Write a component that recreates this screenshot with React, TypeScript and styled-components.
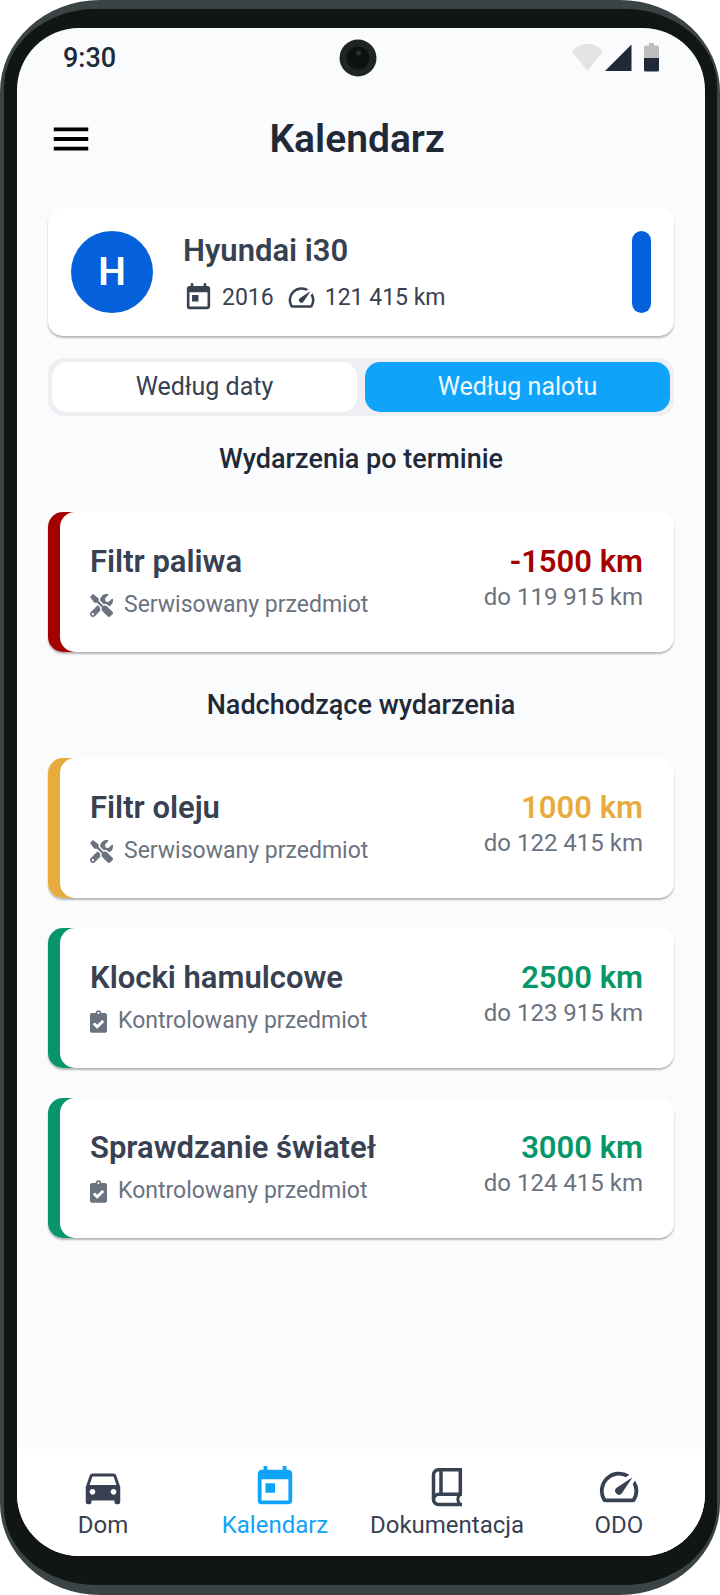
import React from "react";
import styled, { createGlobalStyle, css } from "styled-components";
import { MdMenu, MdToday, MdSpeed, MdDirectionsCar } from "react-icons/md";
import { FaTools, FaClipboardCheck } from "react-icons/fa";

const GlobalStyle = createGlobalStyle`
  *, *::before, *::after { box-sizing: border-box; }
  body {
    margin: 0;
    background: #ffffff;
    font-family: Roboto, "Liberation Sans", sans-serif;
    color: #374151;
  }
  h1, h2, h3, p, ul { margin: 0; padding: 0; }
  button { font: inherit; border: 0; padding: 0; cursor: pointer; }
  svg { display: block; flex: none; }
`;

const colors = {
  ink: "#1f2937",
  slate: "#374151",
  muted: "#6b7280",
  sky: "#10a3fa",
  brand: "#0561db",
  red: "#a50000",
  amber: "#e8ac3e",
  green: "#079669",
};

const Shell = styled.div`
  display: flex;
  flex-direction: column;
  min-height: 100vh;
  padding: 9px 3px 10px 4px;
  border-radius: 100px / 92px;
  background: #3b4444;
`;

const Bezel = styled.div`
  flex: 1;
  display: flex;
  flex-direction: column;
  padding: 19px 12px 29px 13px;
  border-radius: 92px / 78px;
  background: #111513;
`;

const Screen = styled.div`
  flex: 1;
  display: flex;
  flex-direction: column;
  overflow: hidden;
  border-radius: 62px;
  background: #fafbfd;
`;

const StatusBar = styled.div`
  display: grid;
  grid-template-columns: 1fr 46px 1fr;
  align-items: center;
  height: 60px;
  padding: 0 45px 0 46px;
  color: ${colors.ink};
  font-size: 27px;
  line-height: 30px;
  font-weight: 500;
`;

const StatusIcons = styled.div`
  display: flex;
  justify-content: flex-end;
`;

const Header = styled.header`
  display: grid;
  grid-template-columns: 46px 1fr 54px;
  align-items: center;
  height: 102px;
  padding: 0 31px;
`;

const MenuButton = styled.button`
  background: none;
  color: #000000;
`;

const Title = styled.h1`
  text-align: center;
  font-size: 39px;
  line-height: 46px;
  font-weight: 600;
  color: ${colors.ink};
`;

const Main = styled.main`
  flex: 1;
  display: flex;
  flex-direction: column;
  padding: 18px 31px 32px;
`;

const cardShadow = css`
  box-shadow: 0 2px 2px rgba(0, 0, 0, 0.28);
`;

const VehicleCard = styled.section`
  display: flex;
  align-items: center;
  gap: 30px;
  padding: 23px;
  border-radius: 15px;
  background: #ffffff;
  ${cardShadow}
`;

const Avatar = styled.div`
  display: grid;
  place-items: center;
  width: 82px;
  height: 82px;
  border-radius: 50%;
  background: ${colors.brand};
  color: #ffffff;
  font-size: 39px;
  font-weight: 600;
`;

const VehicleInfo = styled.div`
  flex: 1;
`;

const CardTitle = styled.h3`
  font-size: 31px;
  line-height: 38px;
  font-weight: 600;
  color: ${colors.slate};
`;

const VehicleMeta = styled.div`
  display: flex;
  gap: 12px;
  margin-top: 12px;
  font-size: 23px;
  line-height: 31px;
`;

const MetaItem = styled.span`
  display: flex;
  align-items: center;
  gap: 8px;
`;

const ColorBar = styled.div`
  width: 19px;
  height: 82px;
  border-radius: 10px;
  background: ${colors.brand};
`;

const Segmented = styled.div`
  display: grid;
  grid-template-columns: 1fr 1fr;
  gap: 8px;
  margin-top: 22px;
  padding: 4px;
  border-radius: 16px;
  background: #edeff2;
`;

const Segment = styled.button<{ $active?: boolean }>`
  height: 50px;
  border-radius: 15px;
  font-size: 25px;
  line-height: 30px;
  background: ${(p) => (p.$active ? colors.sky : "#ffffff")};
  color: ${(p) => (p.$active ? "#f0f9ff" : colors.slate)};
`;

const SectionTitle = styled.h2`
  padding: 27px 0 37px;
  text-align: center;
  font-size: 27px;
  line-height: 32px;
  font-weight: 500;
  color: ${colors.ink};
`;

const EventList = styled.ul`
  display: flex;
  flex-direction: column;
  gap: 30px;
  list-style: none;

  & + ${SectionTitle} {
    padding-top: 37px;
  }
`;

const EventItem = styled.li<{ $accent: string }>`
  padding-left: 12px;
  border-radius: 15px;
  background: linear-gradient(${(p) => p.$accent}, ${(p) => p.$accent}) left / 40px 100% no-repeat;
  ${cardShadow}
`;

const EventBody = styled.div`
  display: flex;
  justify-content: space-between;
  min-height: 140px;
  padding: 31px 31px 29px 30px;
  border-radius: 15px;
  background: #ffffff;
`;

const EventKind = styled.p`
  display: flex;
  align-items: center;
  gap: 11px;
  margin-top: 9px;
  font-size: 23px;
  line-height: 30px;
  color: ${colors.muted};
`;

const ServiceIcon = styled(FaTools)`
  width: 23px;
  height: 23px;
`;

const CheckIcon = styled(FaClipboardCheck)`
  width: 17px;
  height: 23px;
`;

const EventDue = styled.div`
  text-align: right;
`;

const Remaining = styled.p<{ $color: string }>`
  font-size: 31px;
  line-height: 38px;
  font-weight: 600;
  color: ${(p) => p.$color};
`;

const Target = styled.p`
  font-size: 24px;
  line-height: 32px;
  color: ${colors.muted};
`;

const NavBar = styled.nav`
  display: grid;
  grid-template-columns: repeat(4, 1fr);
  padding: 15px 0 16px;
  background: #ffffff;
`;

const NavLink = styled.a<{ $active?: boolean }>`
  display: flex;
  flex-direction: column;
  align-items: center;
  font-size: 24px;
  line-height: 30px;
  text-decoration: none;
  color: ${(p) => (p.$active ? colors.sky : colors.slate)};
`;

const Camera = () => (
  <svg width="38" height="38" viewBox="0 0 38 38" aria-hidden="true">
    <circle cx="19" cy="19" r="18.5" fill="#202423" />
    <circle cx="19" cy="19" r="11.5" fill="#0d1211" />
    <circle cx="19.5" cy="14" r="2.5" fill="#2b3130" />
  </svg>
);

const SignalIcons = () => (
  <svg width="88" height="30" viewBox="0 0 88 30" aria-hidden="true">
    <path d="M0 8.5C4 3 10 1 15.500 1S27 3 31 8.500L15.500 28Z" fill="#e3e4e6" />
    <path d="M59.500 1.500V28H33Z" fill={colors.ink} />
    <path d="M72 15V4q0-1.500 1.500-1.500H77V0h5v2.500h3.500q1.500 0 1.500 1.500v11Z" fill="#bcbdbf" />
    <path d="M72 15h15v12q0 1.500-1.500 1.500h-12Q72 28.500 72 27Z" fill={colors.ink} />
  </svg>
);

const BookIcon = () => (
  <svg width="46" height="46" viewBox="0 0 46 46" fill="none" stroke="currentColor" strokeWidth="3.5" aria-hidden="true">
    <path d="M36.300 30V5.800H14.500a5 5 0 0 0-5 5v24.700a5 5 0 0 0 5 5H38" />
    <path d="M17 6v24" strokeWidth="3.500" />
    <path d="M9.500 35.500a5.500 5.500 0 0 1 5.500-5.300h23" />
    <path d="M36 30.500C33 33 33 37.500 36.500 41" strokeWidth="3" />
  </svg>
);

type EventData = {
  name: string;
  kind: "service" | "check";
  remaining: string;
  target: string;
  color: string;
};

const overdue: EventData[] = [
  { name: "Filtr paliwa", kind: "service", remaining: "-1500 km", target: "do 119 915 km", color: colors.red },
];

const upcoming: EventData[] = [
  { name: "Filtr oleju", kind: "service", remaining: "1000 km", target: "do 122 415 km", color: colors.amber },
  { name: "Klocki hamulcowe", kind: "check", remaining: "2500 km", target: "do 123 915 km", color: colors.green },
  { name: "Sprawdzanie świateł", kind: "check", remaining: "3000 km", target: "do 124 415 km", color: colors.green },
];

const Events = ({ items }: { items: EventData[] }) => (
  <EventList>
    {items.map((e) => (
      <EventItem key={e.name} $accent={e.color}>
        <EventBody>
          <div>
            <CardTitle>{e.name}</CardTitle>
            <EventKind>
              {e.kind === "service" ? <ServiceIcon /> : <CheckIcon />}
              {e.kind === "service" ? "Serwisowany przedmiot" : "Kontrolowany przedmiot"}
            </EventKind>
          </div>
          <EventDue>
            <Remaining $color={e.color}>{e.remaining}</Remaining>
            <Target>{e.target}</Target>
          </EventDue>
        </EventBody>
      </EventItem>
    ))}
  </EventList>
);

export default function App() {
  return (
    <>
      <GlobalStyle />
      <Shell>
        <Bezel>
          <Screen>
            <StatusBar>
              <span>9:30</span>
              <Camera />
              <StatusIcons>
                <SignalIcons />
              </StatusIcons>
            </StatusBar>
            <Header>
              <MenuButton type="button" aria-label="Menu">
                <MdMenu size={46} />
              </MenuButton>
              <Title>Kalendarz</Title>
            </Header>
            <Main>
              <VehicleCard>
                <Avatar>H</Avatar>
                <VehicleInfo>
                  <CardTitle as="h2">Hyundai i30</CardTitle>
                  <VehicleMeta>
                    <MetaItem>
                      <MdToday size={31} />
                      2016
                    </MetaItem>
                    <MetaItem>
                      <MdSpeed size={31} />
                      121 415 km
                    </MetaItem>
                  </VehicleMeta>
                </VehicleInfo>
                <ColorBar />
              </VehicleCard>
              <Segmented>
                <Segment type="button" aria-pressed="false">Według daty</Segment>
                <Segment type="button" aria-pressed="true" $active>Według nalotu</Segment>
              </Segmented>
              <SectionTitle>Wydarzenia po terminie</SectionTitle>
              <Events items={overdue} />
              <SectionTitle>Nadchodzące wydarzenia</SectionTitle>
              <Events items={upcoming} />
            </Main>
            <NavBar>
              <NavLink href="#dom"><MdDirectionsCar size={46} />Dom</NavLink>
              <NavLink href="#kalendarz" aria-current="page" $active><MdToday size={46} />Kalendarz</NavLink>
              <NavLink href="#dokumentacja"><BookIcon />Dokumentacja</NavLink>
              <NavLink href="#odo"><MdSpeed size={46} />ODO</NavLink>
            </NavBar>
          </Screen>
        </Bezel>
      </Shell>
    </>
  );
}
